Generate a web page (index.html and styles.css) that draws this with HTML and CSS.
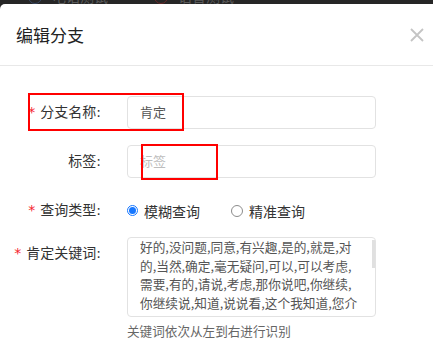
FILE: index.html
```html
<!DOCTYPE html>
<html lang="zh-CN">
<head>
  <meta charset="UTF-8">
  <meta name="viewport" content="width=device-width, initial-scale=1.0">
  <title>编辑分支</title>
  <link rel="stylesheet" href="styles.css">
</head>
<body>
  <div class="topbar">
    <div class="tabs">
      <span class="tab"><span class="tab-icon blue"></span>电话测试</span>
      <span class="tab"><span class="tab-icon red"></span>语音测试</span>
    </div>
  </div>

  <div class="modal">
    <div class="modal-header">
      <span class="modal-title">编辑分支</span>
      <svg class="close" width="14" height="14" viewBox="0 0 14 14">
        <path d="M1 1 L13 13 M13 1 L1 13" stroke="#c4c4c4" stroke-width="1.8" fill="none"/>
      </svg>
    </div>

    <div class="form">
      <div class="item item-name">
        <div class="label"><span class="req">*</span>分支名称:</div>
        <div class="control">
          <div class="input">肯定</div>
        </div>
        <div class="mark mark-name"></div>
      </div>

      <div class="item item-tag">
        <div class="label">标签:</div>
        <div class="control">
          <div class="input placeholder">标签</div>
        </div>
        <div class="mark mark-tag"></div>
      </div>

      <div class="item item-type">
        <div class="label"><span class="req">*</span>查询类型:</div>
        <div class="control radios">
          <label class="radio checked"><span class="dot"></span>模糊查询</label>
          <label class="radio"><span class="dot"></span>精准查询</label>
        </div>
      </div>

      <div class="item item-words">
        <div class="label"><span class="req">*</span>肯定关键词:</div>
        <div class="control">
          <div class="textarea">
            <div class="textarea-text">
              好的,没问题,同意,有兴趣,是的,就是,对<br>
              的,当然,确定,毫无疑问,可以,可以考虑,<br>
              需要,有的,请说,考虑,那你说吧,你继续,<br>
              你继续说,知道,说说看,这个我知道,您介<br>
              绍一下,需要,比较满意,好的,好了,我也是
            </div>
            <div class="thumb"></div>
          </div>
          <div class="hint">关键词依次从左到右进行识别</div>
        </div>
      </div>
    </div>
  </div>
</body>
</html>
```

FILE: styles.css
```css
/* 弹窗样式 */
body {
  margin: 0;
  background-color: #262626;
  font-family: "DejaVu Sans", "Noto Sans CJK SC", sans-serif;
  overflow: hidden;
  height: 345px;
}
.topbar {
  height: 4px;
  overflow: hidden;
}
.tabs {
  display: flex;
  padding-left: 28px;
  margin-top: -10px;
  font-size: 14px;
  line-height: 14px;
  color: #5a5a5a;
}
.tab {
  display: flex;
  align-items: center;
  margin-right: 46px;
}
.tab-icon {
  width: 12px;
  height: 12px;
  margin-right: 10px;
  border-radius: 50%;
  border: 1px solid #3a4a66;
}
.tab-icon.red {
  border-color: #6a2a2a;
}
.modal {
  background-color: #fff;
  border-top-left-radius: 5px;
  height: 341px;
}
.modal-header {
  height: 61px;
  padding: 0 9px 0 16px;
  display: flex;
  align-items: center;
  justify-content: space-between;
  border-bottom: 1px solid #e8e8e8;
}
.modal-title {
  font-size: 17px;
  color: #222;
}
.form {
  padding-top: 30px;
}
.item {
  display: flex;
  position: relative;
}
.item-tag {
  margin-top: 16px;
}
.item-type {
  margin-top: 16px;
}
.item-words {
  margin-top: 10px;
}
.label {
  width: 101px;
  flex: none;
  text-align: right;
  font-size: 14px;
  line-height: 33px;
  color: #333;
}
.req {
  color: #f5222d;
  margin-right: 5px;
}
.control {
  margin-left: 26px;
  width: 249px;
}
.input {
  height: 31px;
  border: 1px solid #e2e2e2;
  border-radius: 4px;
  padding: 0 12px;
  font-size: 13px;
  line-height: 31px;
  color: #555;
}
.placeholder {
  color: #bdbdbd;
}
.radios {
  display: flex;
  align-items: center;
  height: 33px;
}
.radio {
  display: flex;
  align-items: center;
  font-size: 14px;
  color: #333;
  margin-right: 31px;
}
.dot {
  width: 10px;
  height: 10px;
  border: 1px solid #8c8c8c;
  border-radius: 50%;
  margin-right: 6px;
  position: relative;
}
.radio.checked .dot {
  border: 1.5px solid #1677ff;
  width: 9px;
  height: 9px;
}
.radio.checked .dot::after {
  content: "";
  position: absolute;
  left: 1px;
  top: 1px;
  width: 7px;
  height: 7px;
  border-radius: 50%;
  background-color: #1677ff;
}
.textarea {
  position: relative;
  height: 78px;
  border: 1px solid #e2e2e2;
  border-radius: 4px;
  padding: 0 12px;
  overflow: hidden;
}
.textarea-text {
  font-family: "Noto Sans CJK SC", sans-serif;
  font-size: 12.7px;
  line-height: 18.7px;
  color: #555;
  white-space: nowrap;
}
.thumb {
  position: absolute;
  right: 0;
  top: 2px;
  width: 3px;
  height: 28px;
  background-color: #e0e0e0;
}
.hint {
  margin-top: 5px;
  font-size: 12.6px;
  line-height: 20px;
  color: #666;
}
/* 标注框 */
.mark {
  position: absolute;
  border: 2px solid #ff0000;
}
.mark-name {
  left: 28px;
  top: -3px;
  width: 152px;
  height: 34px;
}
.mark-tag {
  left: 141px;
  top: -1px;
  width: 73px;
  height: 32px;
}
```
